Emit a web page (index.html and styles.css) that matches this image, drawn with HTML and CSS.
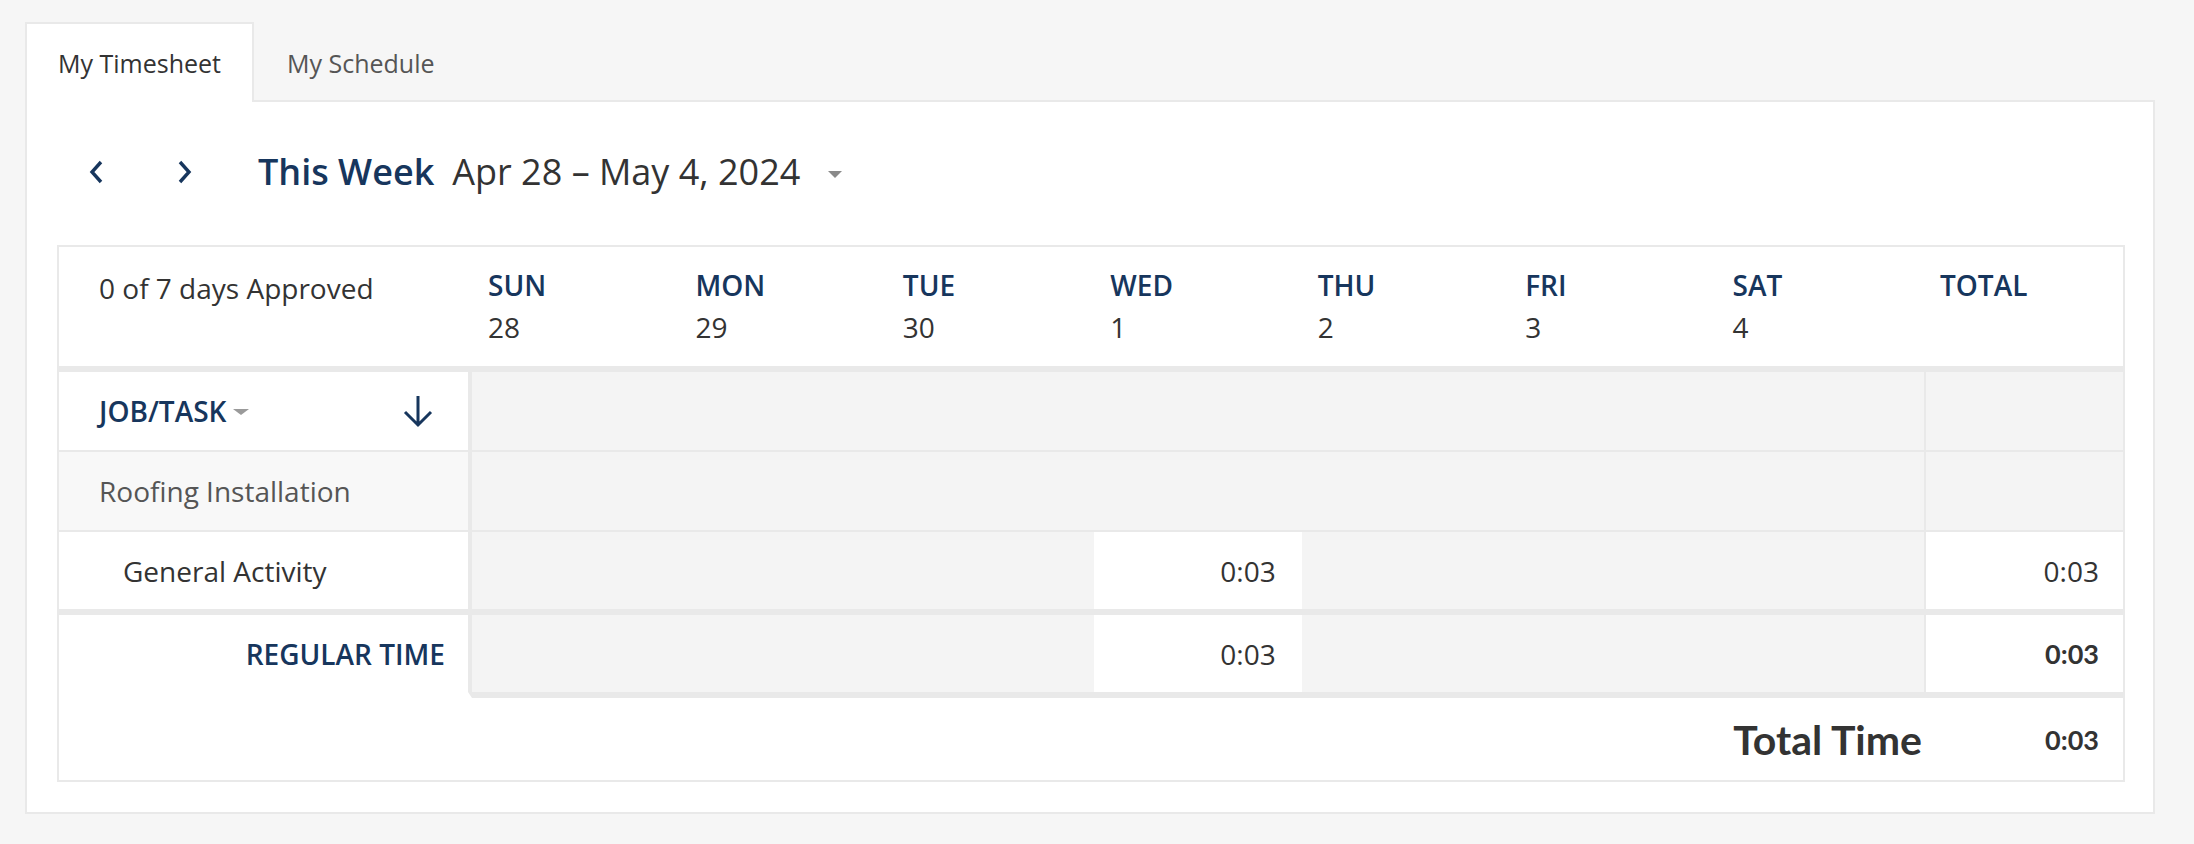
FILE: index.html
```html
<!DOCTYPE html>
<html lang="en">
<head>
    <meta charset="UTF-8">
    <meta name="viewport" content="width=device-width, initial-scale=1.0">
    <title>My Timesheet</title>
    <link rel="stylesheet" href="styles.css">
</head>
<body>
    <div class="page">
        <!-- Tabs -->
        <div class="tabs">
            <div class="tab active">My Timesheet</div>
            <div class="tab">My Schedule</div>
        </div>

        <div class="panel">
            <!-- Week picker -->
            <div class="week-nav">
                <button class="nav-btn prev" title="Previous week">
                    <svg width="16" height="24" viewBox="0 0 16 24"><path d="M13 2 L4 12 L13 22" fill="none" stroke="#17365d" stroke-width="3.4"/></svg>
                </button>
                <button class="nav-btn next" title="Next week">
                    <svg width="16" height="24" viewBox="0 0 16 24"><path d="M3 2 L12 12 L3 22" fill="none" stroke="#17365d" stroke-width="3.4"/></svg>
                </button>
                <span class="week-label">This Week</span>
                <span class="week-range">Apr 28 – May 4, 2024</span>
                <span class="caret"></span>
            </div>

            <!-- Timesheet grid -->
            <div class="sheet">
                <div class="row head">
                    <div class="head-cell approved">0 of 7 days Approved</div>
                    <div class="head-cell"><div class="day-name">SUN</div><div>28</div></div>
                    <div class="head-cell"><div class="day-name">MON</div><div>29</div></div>
                    <div class="head-cell"><div class="day-name">TUE</div><div>30</div></div>
                    <div class="head-cell"><div class="day-name">WED</div><div>1</div></div>
                    <div class="head-cell"><div class="day-name">THU</div><div>2</div></div>
                    <div class="head-cell"><div class="day-name">FRI</div><div>3</div></div>
                    <div class="head-cell"><div class="day-name">SAT</div><div>4</div></div>
                    <div class="head-cell"><div class="day-name">TOTAL</div></div>
                </div>

                <div class="row">
                    <div class="cell label sort">
                        <span class="sort-label">JOB/TASK<span class="small-caret"></span></span>
                        <svg width="32" height="33" viewBox="0 0 32 33"><path d="M16 1 V30 M3 17 L16 30 L29 17" fill="none" stroke="#17365d" stroke-width="3"/></svg>
                    </div>
                    <div class="cell day"></div>
                    <div class="cell day"></div>
                    <div class="cell day"></div>
                    <div class="cell day"></div>
                    <div class="cell day"></div>
                    <div class="cell day"></div>
                    <div class="cell day"></div>
                    <div class="cell total"></div>
                </div>

                <div class="row">
                    <div class="cell label job">Roofing Installation</div>
                    <div class="cell day"></div>
                    <div class="cell day"></div>
                    <div class="cell day"></div>
                    <div class="cell day"></div>
                    <div class="cell day"></div>
                    <div class="cell day"></div>
                    <div class="cell day"></div>
                    <div class="cell total"></div>
                </div>

                <div class="row last-task">
                    <div class="cell label task">General Activity</div>
                    <div class="cell day"></div>
                    <div class="cell day"></div>
                    <div class="cell day"></div>
                    <div class="cell day filled">0:03</div>
                    <div class="cell day"></div>
                    <div class="cell day"></div>
                    <div class="cell day"></div>
                    <div class="cell total filled">0:03</div>
                </div>

                <div class="row regular">
                    <div class="cell label time-type">REGULAR TIME</div>
                    <div class="cell day"></div>
                    <div class="cell day"></div>
                    <div class="cell day"></div>
                    <div class="cell day filled">0:03</div>
                    <div class="cell day"></div>
                    <div class="cell day"></div>
                    <div class="cell day"></div>
                    <div class="cell total filled strong">0:03</div>
                </div>

                <div class="row grand-total">
                    <div class="grand-label">Total Time</div>
                    <div class="grand-value strong">0:03</div>
                </div>
            </div>
        </div>
    </div>
</body>
</html>
```

FILE: styles.css
```css
body {
    margin: 0;
    background-color: #f6f6f6;
    font-family: "Open Sans", "DejaVu Sans", sans-serif;
    color: #333;
}

.page {
    padding: 22px 39px 30px 25px;
}

/* Tabs */
.tabs {
    display: flex;
}

.tab {
    box-sizing: border-box;
    height: 80px;
    display: flex;
    align-items: center;
    padding: 0 31px;
    font-size: 25px;
    color: #555;
    border: 2px solid transparent;
    border-bottom: none;
    margin-bottom: -2px;
    position: relative;
}

.tab.active {
    background: #fff;
    color: #333;
    border-color: #e9e9e9;
    z-index: 1;
}

.panel {
    background: #fff;
    border: 2px solid #e9e9e9;
    padding: 45px 28px 30px 30px;
}

/* Week picker */
.week-nav {
    display: flex;
    align-items: center;
    height: 50px;
    margin-bottom: 48px;
}

.nav-btn {
    width: 44px;
    height: 44px;
    padding: 0;
    border: none;
    background: none;
    display: flex;
    align-items: center;
    justify-content: center;
    cursor: pointer;
}

.nav-btn.prev {
    margin-left: 17px;
}

.nav-btn.next {
    margin-left: 45px;
}

.week-label {
    margin-left: 51px;
    font-size: 36px;
    font-weight: 600;
    color: #17365d;
    line-height: 50px;
}

.week-range {
    margin-left: 18px;
    font-size: 36px;
    line-height: 50px;
    color: #333;
}

.caret {
    margin-left: 28px;
    margin-top: 4px;
    border-left: 7.5px solid transparent;
    border-right: 7.5px solid transparent;
    border-top: 7px solid #8a8a8a;
}

/* Timesheet grid */
.sheet {
    border: 2px solid #e9e9e9;
}

.row {
    display: grid;
    grid-template-columns: 413px repeat(7, 1fr) 199px;
}

.row.head {
    padding: 17px 0 18px;
    border-bottom: 6px solid #e9e9e9;
}

.head-cell {
    font-size: 28px;
    line-height: 42px;
    padding-left: 16px;
}

.head-cell.approved {
    padding-left: 40px;
    padding-top: 3px;
}

.day-name {
    font-weight: 600;
    color: #17365d;
}

.cell {
    box-sizing: border-box;
    height: 80px;
    display: flex;
    align-items: center;
    font-size: 28px;
    border-bottom: 2px solid #e9e9e9;
}

.row.last-task .cell,
.row.regular .cell {
    height: 83px;
    border-bottom-width: 6px;
}

.row.regular .cell.label {
    border-bottom-color: #fff;
}

.cell.label {
    background: #fff;
    border-right: 4px solid #e9e9e9;
    padding-left: 40px;
}

.cell.sort {
    justify-content: space-between;
    padding-right: 34px;
}

.sort-label {
    font-weight: 600;
    color: #17365d;
    display: flex;
    align-items: center;
}

.small-caret {
    margin-left: 7px;
    margin-top: 2px;
    border-left: 8px solid transparent;
    border-right: 8px solid transparent;
    border-top: 6px solid #9a9a9a;
}

.cell.job {
    background: #f8f8f8;
    color: #555;
}

.cell.task {
    padding-left: 64px;
}

.cell.time-type {
    justify-content: flex-end;
    padding-right: 23px;
    font-weight: 600;
    color: #17365d;
}

.cell.day {
    background: #f4f4f4;
}

.cell.total {
    background: #f4f4f4;
    border-left: 2px solid #e9e9e9;
}

.cell.filled {
    background: #fff;
    justify-content: flex-end;
    padding-right: 26px;
}

.cell.total.filled {
    padding-right: 24px;
}

.strong {
    font-family: Lato, "Open Sans", sans-serif;
    font-weight: 700;
    font-size: 27px;
}

/* Bottom total line */
.row.grand-total {
    height: 82px;
    align-items: center;
    grid-template-columns: 1fr 199px;
}

.grand-label {
    text-align: right;
    padding-right: 2px;
    font-family: Lato, "Open Sans", sans-serif;
    font-weight: 700;
    font-size: 41px;
}

.grand-value {
    text-align: right;
    padding-right: 24px;
}
```
